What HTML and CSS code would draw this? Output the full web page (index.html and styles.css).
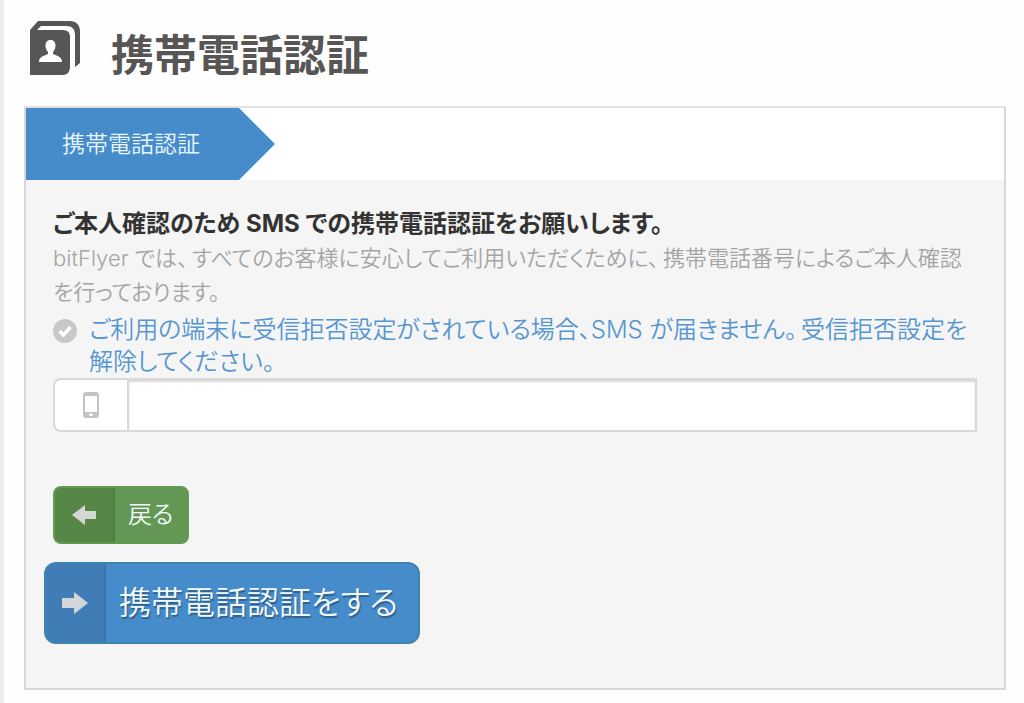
FILE: index.html
```
<!DOCTYPE html>
<html lang="ja">
<head>
  <meta charset="UTF-8">
  <meta name="viewport" content="width=device-width, initial-scale=1.0">
  <title>携帯電話認証</title>
  <link rel="stylesheet" href="styles.css">
</head>
<body>
  <main class="page">
    <header class="page-header">
      <svg class="book-icon" viewBox="0 0 50 54" aria-hidden="true">
        <path fill="#575655" d="M0 9 8 0h32c6 0 10 4 10 10v32l-5 4V14c0-6-3-9-9-9H11L7 9h26c5 0 7 3 7 7v30c0 5-3 8-7 8H0z"/>
        <path fill="#fff" d="M20.500 19c3 0 5 2 5 5.500 0 3-1 5-2.500 6.500v2c5 2 9 3 9 8H9c0-5 4-6 9-8v-2c-1.500-1.500-2.500-3.500-2.500-6.500 0-3.500 2-5.500 5-5.500z"/>
      </svg>
      <h1>携帯電話認証</h1>
    </header>

    <section class="panel">
      <div class="steps">
        <div class="step">携帯電話認証</div>
      </div>
      <form class="panel-body">
        <h2>ご本人確認のため SMS での携帯電話認証をお願いします。</h2>
        <p class="lead">bitFlyer では<span class="punct">、</span>すべてのお客様に安心してご利用いただくために<span class="punct">、</span>携帯電話番号によるご本人確認を行っております。</p>
        <div class="notice">
          <svg class="check-icon" viewBox="0 0 24 24" aria-hidden="true">
            <circle cx="12" cy="12" r="12" fill="#c8c8c8"/>
            <path d="M6.500 12l4 4 7-8" fill="none" stroke="#fff" stroke-width="3.500"/>
          </svg>
          <a href="#">ご利用の端末に受信拒否設定がされている場合、SMS が届きません<span class="punct">。</span>受信拒否設定を解除してください。</a>
        </div>
        <div class="phone-group">
          <label class="phone-addon" for="phone" aria-label="携帯電話番号">
            <svg class="phone-icon" viewBox="0 0 16 26" aria-hidden="true">
              <path fill="#c4c4c4" fill-rule="evenodd" d="M3 0h10c2 0 3 1 3 3v20c0 2-1 3-3 3H3c-2 0-3-1-3-3V3c0-2 1-3 3-3zM2 4v16h12V4zM6.500 21.500h3v2.500h-3z"/>
            </svg>
          </label>
          <input class="phone-input" type="tel" id="phone">
        </div>
        <div class="actions">
          <button class="btn btn-back" type="button">
            <span class="btn-icon"><svg viewBox="0 0 24 20" aria-hidden="true"><path fill="#d5d7d5" d="M0 10 13 0v6h11v8H13v6z"/></svg></span>
            <span class="btn-text">戻る</span>
          </button>
          <button class="btn btn-submit" type="submit">
            <span class="btn-icon"><svg viewBox="0 0 26 22" aria-hidden="true"><path fill="#d2d6da" d="M26 11 12 0v6H0v10h12v6z"/></svg></span>
            <span class="btn-text">携帯電話認証をする</span>
          </button>
        </div>
      </form>
    </section>
  </main>
</body>
</html>
```
FILE: styles.css
```
* { box-sizing: border-box; }
body { margin: 0; background: #fefefe; color: #333; font-family: Inter, "Noto Sans CJK JP", sans-serif; font-weight: 350; font-feature-settings: "palt"; }
h1, h2, p { margin: 0; }

.page { min-height: 100vh; padding: 20px 18px 12px 20px; border-left: 4px solid #ececec; }
.page-header { display: flex; gap: 31px; height: 86px; }
.page-header h1 { font-size: 43px; line-height: 70px; color: #575655; font-feature-settings: normal; }
.book-icon { width: 50px; height: 54px; margin: 1px 0 0 6px; }

.panel { border: 2px solid #d8d8d8; border-top-color: #e2e2e2; background: #f5f5f5; }
.steps { background: #fff; }
.step { width: 249px; padding: 0 36px; background: #468ccb; color: #e8f6ff; font-size: 23px; line-height: 72px; font-feature-settings: normal; white-space: nowrap; clip-path: polygon(0 0, 213px 0, 100% 50%, 213px 100%, 0 100%); }

.panel-body { padding: 27px 27px 44px; }
.panel-body h2 { font-size: 24px; line-height: 34px; }
.lead { color: #a4a4a4; font-size: 22px; line-height: 34px; }
.notice { display: flex; gap: 12px; font-size: 24px; line-height: 32px; padding-top: 5px; }
.notice a { color: #5596d0; text-decoration: none; }
.punct { margin-right: 4px; }
.check-icon { flex: none; width: 24px; height: 24px; margin-top: 5px; }

.phone-group { display: flex; height: 54px; }
.phone-addon { display: flex; align-items: center; justify-content: center; width: 74px; background: #fff; border: 2px solid #d9d9d9; border-right: 0; border-radius: 8px 0 0 8px; }
.phone-icon { width: 16px; height: 26px; }
.phone-input { flex: 1; min-width: 0; padding: 0 16px; border: 2px solid #d9d9d9; border-radius: 0; background: #fff; box-shadow: inset 0 2px 2px #d9d9d9; font: inherit; font-size: 24px; outline: 0; }

.actions { display: flex; flex-direction: column; align-items: flex-start; gap: 18px; margin-top: 54px; }
.btn { display: flex; padding: 0; overflow: hidden; color: #f2faff; font: inherit; font-feature-settings: "palt"; cursor: pointer; }
.btn-icon { display: flex; align-items: center; justify-content: center; width: 60px; }
.btn-icon svg { width: 26px; height: 22px; }
.btn-back { height: 58px; border: 2px solid #5f9c50; border-radius: 8px; background: #629853; font-size: 24px; line-height: 54px; }
.btn-back .btn-icon { background: #568747; border-right: 2px solid #4f7e42; }
.btn-back .btn-icon svg { width: 24px; height: 20px; }
.btn-back .btn-text { padding: 0 13px; }
.btn-submit { height: 82px; margin-left: -9px; border: 2px solid #3c83ae; border-radius: 12px; background: #468ccb; font-size: 32px; line-height: 78px; text-shadow: 1px 2px 1px #315f89; }
.btn-submit .btn-icon { background: #407db6; border-right: 2px solid #3a74aa; }
.btn-submit .btn-text { padding: 0 20px 0 13px; }
```
